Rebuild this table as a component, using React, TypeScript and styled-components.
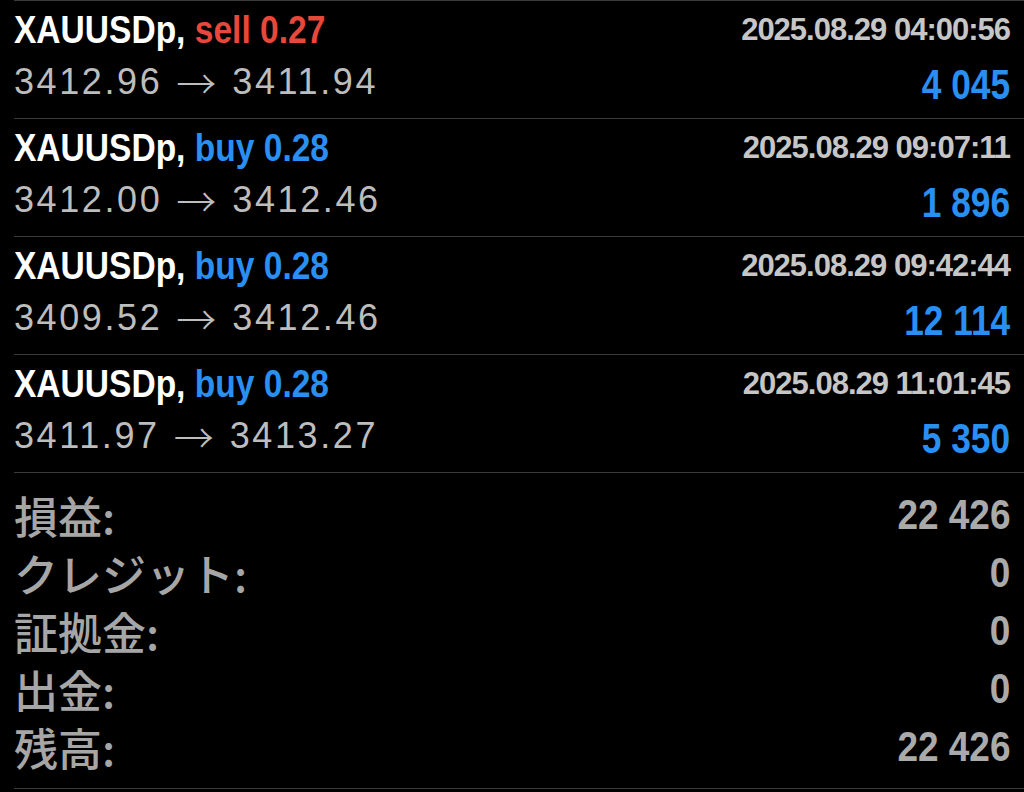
import styled, { createGlobalStyle } from 'styled-components';

type Side = 'buy' | 'sell';

interface Deal {
  symbol: string;
  side: Side;
  volume: string;
  time: string;
  open: string;
  close: string;
  profit: string;
}

const deals: Deal[] = [
  { symbol: 'XAUUSDp', side: 'sell', volume: '0.27', time: '2025.08.29 04:00:56', open: '3412.96', close: '3411.94', profit: '4 045' },
  { symbol: 'XAUUSDp', side: 'buy', volume: '0.28', time: '2025.08.29 09:07:11', open: '3412.00', close: '3412.46', profit: '1 896' },
  { symbol: 'XAUUSDp', side: 'buy', volume: '0.28', time: '2025.08.29 09:42:44', open: '3409.52', close: '3412.46', profit: '12 114' },
  { symbol: 'XAUUSDp', side: 'buy', volume: '0.28', time: '2025.08.29 11:01:45', open: '3411.97', close: '3413.27', profit: '5 350' },
];

const totals = [
  { label: '損益:', value: '22 426' },
  { label: 'クレジット:', value: '0' },
  { label: '証拠金:', value: '0' },
  { label: '出金:', value: '0' },
  { label: '残高:', value: '22 426' },
];

function App() {
  return (
    <>
      <Global />
      <S.Page>
        {deals.map((d, i) => (
          <S.Deal key={i}>
            <S.Line>
              <S.Title>
                {d.symbol},{' '}
                <S.Side $side={d.side}>
                  {d.side} {d.volume}
                </S.Side>
              </S.Title>
              <S.Time>{d.time}</S.Time>
            </S.Line>
            <S.Line>
              <S.Prices>
                <S.Price>{d.open}</S.Price>
                <S.Arrow>→</S.Arrow>
                <S.Price>{d.close}</S.Price>
              </S.Prices>
              <S.Profit>{d.profit}</S.Profit>
            </S.Line>
          </S.Deal>
        ))}
        <S.Summary>
          {totals.map((t) => (
            <S.SummaryRow key={t.label}>
              <S.Label>{t.label}</S.Label>
              <S.Value>{t.value}</S.Value>
            </S.SummaryRow>
          ))}
        </S.Summary>
      </S.Page>
    </>
  );
}

export default App;

const Global = createGlobalStyle`
  *, *::before, *::after {
    box-sizing: border-box;
  }
  html, body {
    margin: 0;
    padding: 0;
    background: #000;
  }
  body {
    font-family: "Liberation Sans", Arial, sans-serif;
  }
`;

// no condensed face installed, so the bold condensed text is squeezed
const S = {
  Page: styled.div`
    background: #000;
    width: 1024px;
    height: 792px;
    padding-left: 14px;
    overflow: hidden;
  `,
  Deal: styled.div`
    border-top: 1px solid #3a3a3a;
    padding: 0 14px 10px 0;
  `,
  Line: styled.div`
    display: flex;
    justify-content: space-between;
    align-items: center;
    height: 55px;
    padding-top: 2px;
    & + & {
      height: 52px;
      padding-top: 0;
    }
  `,
  Title: styled.div`
    font-weight: bold;
    font-size: 39px;
    color: #fff;
    white-space: pre;
    transform: scaleX(0.86);
    transform-origin: left center;
  `,
  Side: styled.span<{ $side: Side }>`
    color: ${(p) => (p.$side === 'sell' ? '#e8473b' : '#2a8ff2')};
  `,
  Time: styled.div`
    font-weight: bold;
    font-size: 31px;
    letter-spacing: -1px;
    color: #c6c6c6;
  `,
  Prices: styled.div`
    display: flex;
    align-items: center;
    color: #bdbdbd;
  `,
  Price: styled.span`
    font-size: 36px;
    letter-spacing: 2.6px;
  `,
  Arrow: styled.span`
    font-family: "Noto Sans CJK JP", sans-serif;
    font-weight: 300;
    font-size: 40px;
    margin: 0 16px 0 14px;
    line-height: 1;
  `,
  Profit: styled.div`
    font-weight: bold;
    font-size: 42px;
    color: #2a8ff2;
    padding-top: 5px;
    transform: scaleX(0.84);
    transform-origin: right center;
  `,
  Summary: styled.div`
    border-top: 1px solid #3a3a3a;
    border-bottom: 1px solid #3a3a3a;
    padding: 13px 14px 12px 0;
  `,
  SummaryRow: styled.div`
    display: flex;
    justify-content: space-between;
    align-items: center;
    height: 58px;
  `,
  Label: styled.div`
    font-family: "Noto Sans CJK JP", "Liberation Sans", sans-serif;
    font-weight: 500;
    font-size: 44px;
    color: #a6a6a6;
  `,
  Value: styled.div`
    font-weight: bold;
    font-size: 42px;
    color: #aaaaaa;
    transform: scaleX(0.88);
    transform-origin: right center;
  `,
};
